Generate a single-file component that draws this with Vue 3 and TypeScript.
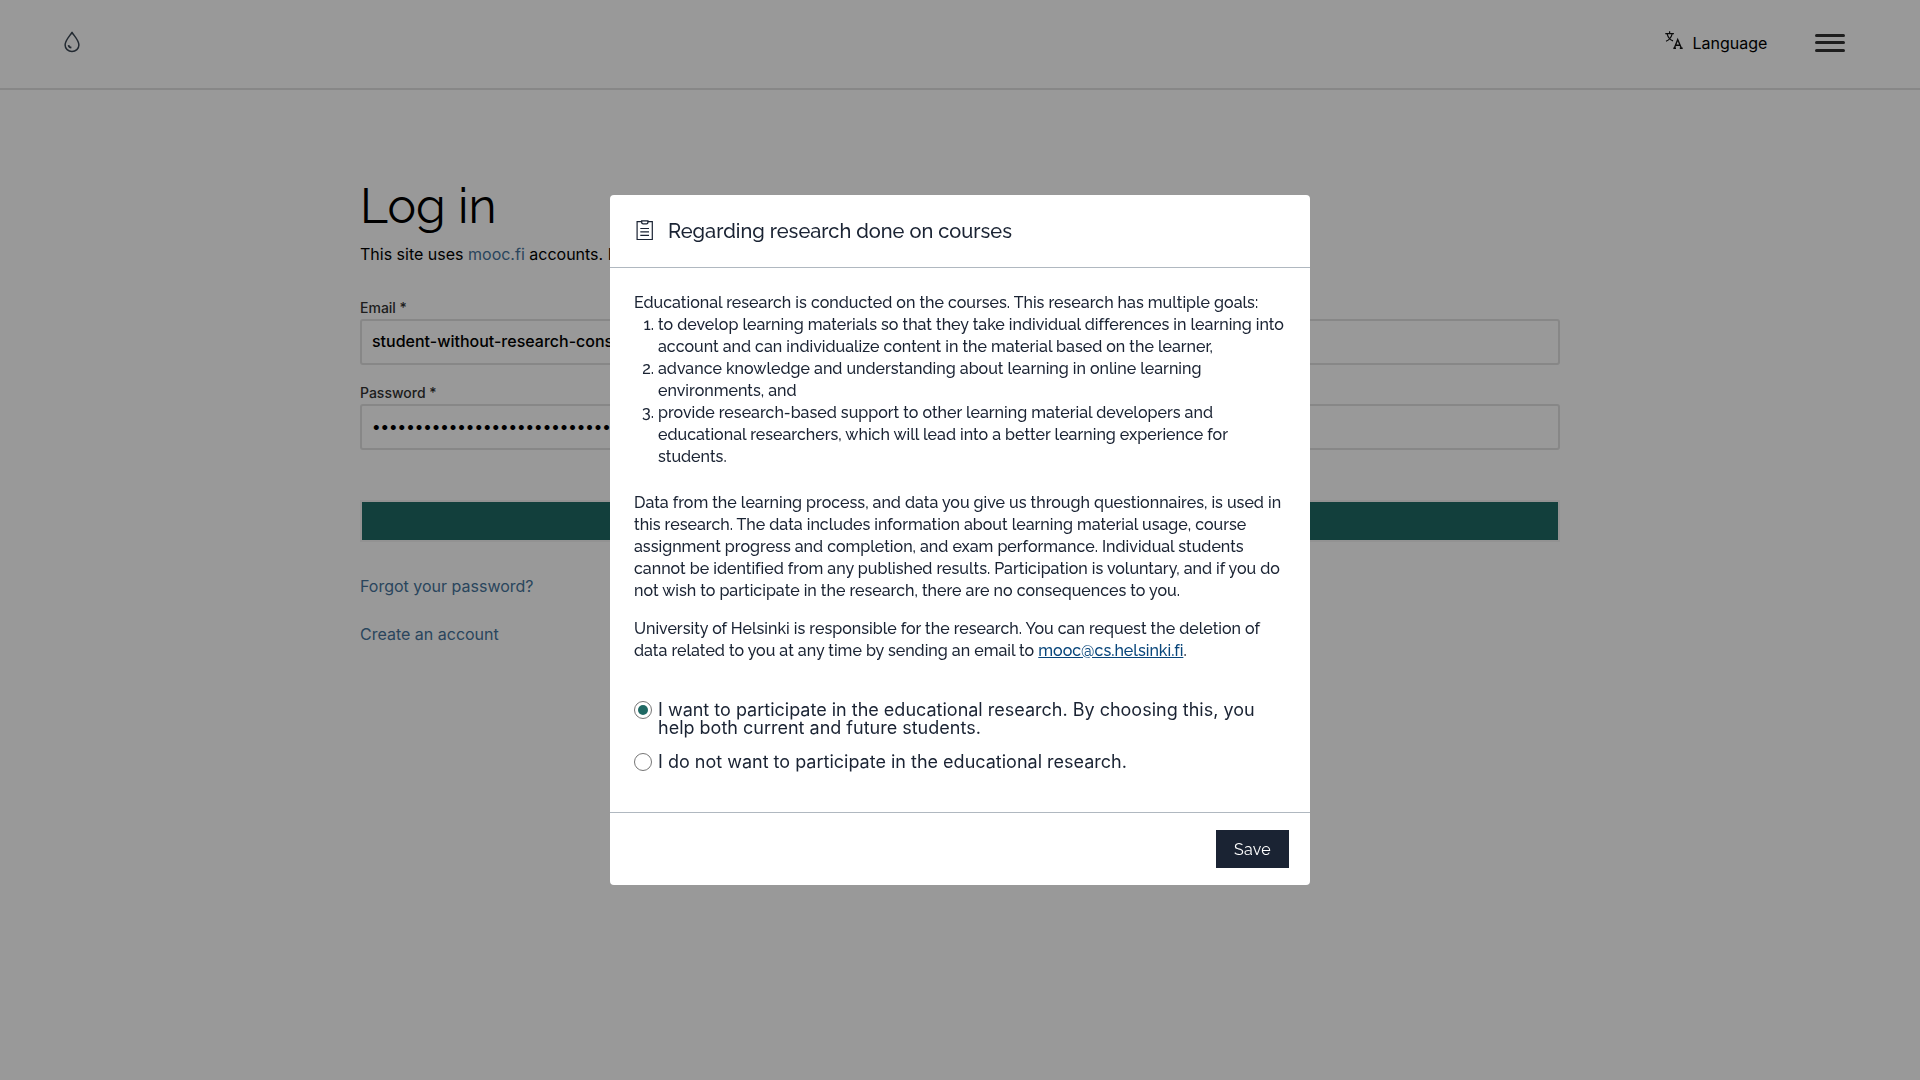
<script setup lang="ts">
import { ref } from 'vue'

const email = ref('student-without-research-consent')
const password = ref('student-without-research-consent')
const consent = ref('yes')

const goals: string[] = [
  'to develop learning materials so that they take individual differences in learning into account and can individualize content in the material based on the learner,',
  'advance knowledge and understanding about learning in online learning environments, and',
  'provide research-based support to other learning material developers and educational researchers, which will lead into a better learning experience for students.',
]
</script>

<template>
  <div class="page">
    <header class="topbar">
      <svg class="drop" width="16" height="22" viewBox="0 0 16 22" fill="none" stroke="#3b4754" stroke-width="1.5">
        <path d="M8 1.3C6.2 4.6 1.1 9.2 1.1 14a6.9 6.5 0 0 0 13.8 0C14.9 9.2 9.8 4.6 8 1.3Z" stroke-linejoin="round" />
        <path d="M4.5 14.2c.2 1.5 1.3 2.3 2.9 2.5" stroke-width="1.7" />
      </svg>
      <nav class="nav">
        <button class="language">
          <svg width="18" height="18" viewBox="0 0 18 18" fill="none" stroke="#111" stroke-width="1.2">
            <path d="M.3 2.6h8.6M4.6.3v2.3M2.1 2.8C3 6.2 5 8.700 8 9.900M7.200 2.800C6.200 6.400 4 9 1 10.200" />
            <path d="M9.300 17.200 12.700 8.500l3.700 8.700M10.600 14.200h4.600M8.300 17.200h2.700M14.800 17.200h2.900" stroke-width="1.4" />
          </svg>
          <span>Language</span>
        </button>
        <button class="menu" aria-label="Menu"><i></i><i></i><i></i></button>
      </nav>
    </header>

    <main class="login">
      <h1>Log in</h1>
      <p class="lead">This site uses <a>mooc.fi</a> accounts. If you</p>
      <label class="field">
        <span>Email *</span>
        <input v-model="email" type="text" />
      </label>
      <label class="field">
        <span>Password *</span>
        <input v-model="password" class="secret" type="password" />
      </label>
      <button class="submit" aria-label="Log in"></button>
      <a class="link">Forgot your password?</a>
      <a class="link">Create an account</a>
    </main>

    <div class="overlay">
      <section class="dialog" role="dialog">
        <div class="dialog-head">
          <svg width="18" height="21" viewBox="0 0 18 21" fill="none" stroke="#1a2333">
            <path d="M5.500 1.600H1.100V19.500H16.300V1.600H12" stroke-width="1.2" />
            <path d="M5.700.8h6.200v1.800c0 .8-.6 1.200-1.400 1.200H7.100c-.8 0-1.400-.4-1.400-1.200Z" stroke-width="1.3" />
            <path d="M4.300 8.500H13M4.300 11.900H13M4.300 15.400H13" stroke-width="1.2" />
          </svg>
          <h2>Regarding research done on courses</h2>
        </div>

        <div class="dialog-body">
          <p>Educational research is conducted on the courses. This research has multiple goals:</p>
          <ol>
            <li v-for="goal in goals" :key="goal">{{ goal }}</li>
          </ol>
          <p class="data">
            Data from the learning process, and data you give us through questionnaires, is used in this research. The
            data includes information about learning material usage, course assignment progress and completion, and exam
            performance. Individual students cannot be identified from any published results. Participation is
            voluntary, and if you do not wish to participate in the research, there are no consequences to you.
          </p>
          <p class="contact">
            University of Helsinki is responsible for the research. You can request the deletion of data related to you
            at any time by sending an email to <a>mooc@cs.helsinki.fi</a>.
          </p>
          <div class="choices">
            <label>
              <input v-model="consent" type="radio" value="yes" />
              <span>I want to participate in the educational research. By choosing this, you help both current and future students.</span>
            </label>
            <label>
              <input v-model="consent" type="radio" value="no" />
              <span>I do not want to participate in the educational research.</span>
            </label>
          </div>
        </div>

        <div class="dialog-foot">
          <button class="save">Save</button>
        </div>
      </section>
    </div>
  </div>
</template>

<style>
body {
  margin: 0;
  overflow: hidden;
}
</style>

<style scoped>
.page {
  height: 1080px;
  background: #fff;
  font-family: Inter, sans-serif;
  font-size: 16px;
  color: #000;
}
.page *,
.page *::before {
  box-sizing: border-box;
}
button {
  border: 0;
  background: none;
  padding: 0;
  font: inherit;
  color: inherit;
}

.topbar {
  display: flex;
  justify-content: space-between;
  height: 90px;
  padding: 0 75px 0 64px;
  border-bottom: 2px solid #e1e1e1;
}
.drop {
  margin-top: 31px;
}
.nav {
  display: flex;
  align-items: flex-start;
}
.language {
  display: flex;
  gap: 9.5px;
  width: 103px;
  height: 24px;
  margin: 31px 47px 0 0;
  line-height: 24px;
}
.language svg {
  flex: none;
}
.menu {
  display: flex;
  flex-direction: column;
  width: 30px;
  margin-top: 34px;
}
.menu i {
  height: 3px;
  margin-bottom: 4px;
  border-radius: 2px;
  background: #333;
}
.menu i + i {
  margin-bottom: 5px;
}

.login {
  display: flex;
  flex-direction: column;
  align-items: flex-start;
  width: 1200px;
  margin: 0 auto;
  padding-top: 86px;
}
h1 {
  margin: 0;
  font: 400 48px/60px Raleway, Lato, sans-serif;
}
.lead {
  margin: 6px 0 0;
  line-height: 24px;
}
.lead a,
.link {
  color: #46749b;
}
.field {
  display: flex;
  flex-direction: column;
  width: 100%;
  margin-top: 31px;
}
.field + .field {
  margin-top: 17px;
}
.field span {
  height: 22px;
  font-size: 14px;
  font-weight: 500;
  line-height: 21px;
  color: #333;
}
.field input {
  width: 100%;
  height: 46px;
  padding: 0 10px 2px;
  border: 2px solid #e1e1e1;
  border-radius: 3px;
  outline: none;
  background: transparent;
  font: 500 16px/22px Inter, sans-serif;
  color: #000;
}
.submit {
  width: 1200px;
  height: 42px;
  margin: 50px 0 32px;
  border: 2px solid #f3f3f3;
  background: #1f6964;
}
.link {
  margin-bottom: 24px;
  line-height: 24px;
}

.overlay {
  position: fixed;
  inset: 0;
  display: flex;
  align-items: center;
  justify-content: center;
  background: rgba(0, 0, 0, 0.4);
}
.dialog {
  display: flex;
  flex-direction: column;
  width: 700px;
  height: 690px;
  border-radius: 4px;
  background: #fff;
  font-family: Raleway, Lato, sans-serif;
  color: #1a2333;
}
.dialog-head {
  display: flex;
  gap: 14px;
  height: 73px;
  padding: 25px 26px 0;
  border-bottom: 1px solid #b0b8c0;
}
h2 {
  margin: 0;
  font-size: 20px;
  font-weight: 500;
  line-height: 22px;
}
.dialog-body {
  flex: 1;
  padding: 24px 24px 0;
  font-weight: 500;
  font-variant-ligatures: none;
  line-height: 22px;
}
.dialog-body p {
  margin: 0;
}
ol {
  margin: 0;
  padding: 0 0 0 24px;
}
.dialog-body .data {
  margin-top: 24px;
}
.dialog-body .contact {
  margin-top: 16px;
}
.contact a {
  color: #08457a;
  text-decoration: underline;
}
.choices {
  display: flex;
  flex-direction: column;
  gap: 16px;
  margin-top: 39px;
  font: 18px/18px Inter, sans-serif;
}
.choices label {
  display: flex;
  gap: 6px;
}
.choices input {
  appearance: none;
  flex: none;
  display: grid;
  place-items: center;
  width: 18px;
  height: 18px;
  margin: 0;
  border: 1px solid #767676;
  border-radius: 50%;
}
.choices input:checked::before {
  content: '';
  width: 10px;
  height: 10px;
  border-radius: 50%;
  background: #1f6964;
}
.dialog-foot {
  display: flex;
  justify-content: flex-end;
  height: 73px;
  padding: 17px 21px 0;
  border-top: 1px solid #b0b8c0;
}
.save {
  width: 73px;
  height: 38px;
  background: #1a2333;
  color: #fff;
  letter-spacing: 0.3px;
  line-height: 40px;
}
</style>
